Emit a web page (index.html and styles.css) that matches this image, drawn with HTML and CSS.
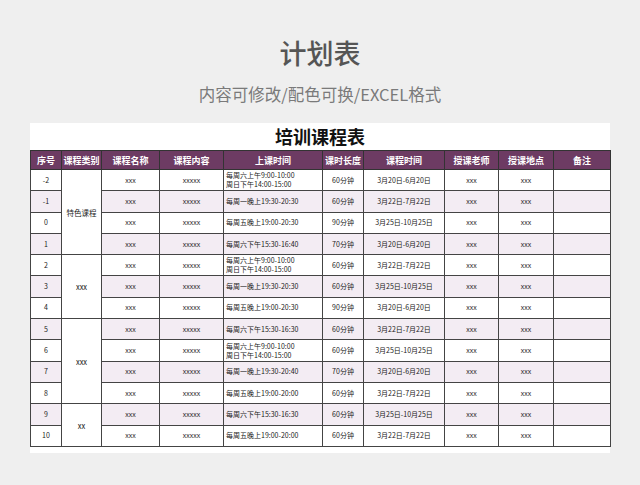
FILE: index.html
```html
<!DOCTYPE html>
<html lang="zh">
<head>
<meta charset="utf-8">
<title>计划表</title>
<link rel="stylesheet" href="styles.css">
</head>
<body>
<header class="top">
  <h1 class="main-title">计划表</h1>
  <p class="subtitle">内容可修改/配色可换/EXCEL格式</p>
</header>
<section class="panel">
  <h2 class="sheet-title">培训课程表</h2>
  <table class="sheet">
    <colgroup>
      <col class="c1"><col class="c2"><col class="c3"><col class="c4"><col class="c5">
      <col class="c6"><col class="c7"><col class="c8"><col class="c9"><col class="c10">
    </colgroup>
    <thead>
      <tr><th>序号</th><th>课程类别</th><th>课程名称</th><th>课程内容</th><th>上课时间</th><th>课时长度</th><th>课程时间</th><th>授课老师</th><th>授课地点</th><th>备注</th></tr>
    </thead>
    <tbody>
      <tr><td>-2</td><td class="cat" rowspan="4">特色课程</td><td>xxx</td><td>xxxxx</td><td class="time">每周六上午9:00-10:00<br>周日下午14:00-15:00</td><td>60分钟</td><td>3月20日-6月20日</td><td>xxx</td><td>xxx</td><td></td></tr>
      <tr class="alt"><td>-1</td><td>xxx</td><td>xxxxx</td><td class="time">每周一晚上19:30-20:30</td><td>60分钟</td><td>3月22日-7月22日</td><td>xxx</td><td>xxx</td><td></td></tr>
      <tr><td>0</td><td>xxx</td><td>xxxxx</td><td class="time">每周五晚上19:00-20:30</td><td>90分钟</td><td>3月25日-10月25日</td><td>xxx</td><td>xxx</td><td></td></tr>
      <tr class="alt"><td>1</td><td>xxx</td><td>xxxxx</td><td class="time">每周六下午15:30-16:40</td><td>70分钟</td><td>3月20日-6月20日</td><td>xxx</td><td>xxx</td><td></td></tr>
      <tr><td>2</td><td class="cat" rowspan="3">xxx</td><td>xxx</td><td>xxxxx</td><td class="time">每周六上午9:00-10:00<br>周日下午14:00-15:00</td><td>60分钟</td><td>3月22日-7月22日</td><td>xxx</td><td>xxx</td><td></td></tr>
      <tr class="alt"><td>3</td><td>xxx</td><td>xxxxx</td><td class="time">每周一晚上19:30-20:30</td><td>60分钟</td><td>3月25日-10月25日</td><td>xxx</td><td>xxx</td><td></td></tr>
      <tr><td>4</td><td>xxx</td><td>xxxxx</td><td class="time">每周五晚上19:00-20:30</td><td>90分钟</td><td>3月20日-6月20日</td><td>xxx</td><td>xxx</td><td></td></tr>
      <tr class="alt"><td>5</td><td class="cat" rowspan="4">xxx</td><td>xxx</td><td>xxxxx</td><td class="time">每周六下午15:30-16:30</td><td>60分钟</td><td>3月22日-7月22日</td><td>xxx</td><td>xxx</td><td></td></tr>
      <tr><td>6</td><td>xxx</td><td>xxxxx</td><td class="time">每周六上午9:00-10:00<br>周日下午14:00-15:00</td><td>60分钟</td><td>3月25日-10月25日</td><td>xxx</td><td>xxx</td><td></td></tr>
      <tr class="alt"><td>7</td><td>xxx</td><td>xxxxx</td><td class="time">每周一晚上19:30-20:40</td><td>70分钟</td><td>3月20日-6月20日</td><td>xxx</td><td>xxx</td><td></td></tr>
      <tr><td>8</td><td>xxx</td><td>xxxxx</td><td class="time">每周五晚上19:00-20:00</td><td>60分钟</td><td>3月22日-7月22日</td><td>xxx</td><td>xxx</td><td></td></tr>
      <tr class="alt"><td>9</td><td class="cat" rowspan="2">xx</td><td>xxx</td><td>xxxxx</td><td class="time">每周六下午15:30-16:30</td><td>60分钟</td><td>3月25日-10月25日</td><td>xxx</td><td>xxx</td><td></td></tr>
      <tr><td>10</td><td>xxx</td><td>xxxxx</td><td class="time">每周五晚上19:00-20:00</td><td>60分钟</td><td>3月22日-7月22日</td><td>xxx</td><td>xxx</td><td></td></tr>
    </tbody>
  </table>
</section>
</body>
</html>
```
FILE: styles.css
```css
html, body {
  margin: 0;
  padding: 0;
  background: #efefef;
  font-family: "Noto Sans CJK SC", "Noto Sans", sans-serif;
}
.top {
  padding-top: 37px;
  text-align: center;
}
.main-title {
  margin: 0;
  font-size: 27px;
  line-height: 32px;
  font-weight: 500;
  color: #555;
}
.subtitle {
  margin: 14px 0 0;
  font-size: 16.5px;
  line-height: 22px;
  color: #7a7a7a;
}
.panel {
  margin: 18px 30px 0;
  width: 580px;
  background: #fff;
  padding-bottom: 6px;
}
.sheet-title {
  margin: 0;
  height: 27px;
  font-size: 18px;
  line-height: 27px;
  font-weight: 700;
  color: #111;
  text-align: center;
}
.sheet {
  width: 580px;
  table-layout: fixed;
  border-collapse: collapse;
}
.c1 { width: 31px; }
.c2 { width: 40px; }
.c3 { width: 58px; }
.c4 { width: 64px; }
.c5 { width: 99px; }
.c6 { width: 41px; }
.c7 { width: 81px; }
.c8 { width: 54px; }
.c9 { width: 55px; }
.c10 { width: 57px; }
.sheet th {
  height: 18px;
  padding: 0;
  background: #6d3b63;
  color: #fff;
  font-size: 9px;
  font-weight: 700;
  border: 1px solid #333;
  white-space: nowrap;
  overflow: hidden;
}
.sheet td {
  height: 20.3px;
  padding: 0;
  font-size: 7px;
  line-height: 9px;
  color: #222;
  text-align: center;
  border: 1px solid #444;
  white-space: nowrap;
  overflow: hidden;
}
.sheet tr.alt td {
  background: #f3ecf3;
}
.sheet td.cat,
.sheet tr.alt td.cat {
  background: #fff;
  font-size: 7.5px;
}
.sheet td.time {
  text-align: left;
  padding-left: 2px;
}
```
